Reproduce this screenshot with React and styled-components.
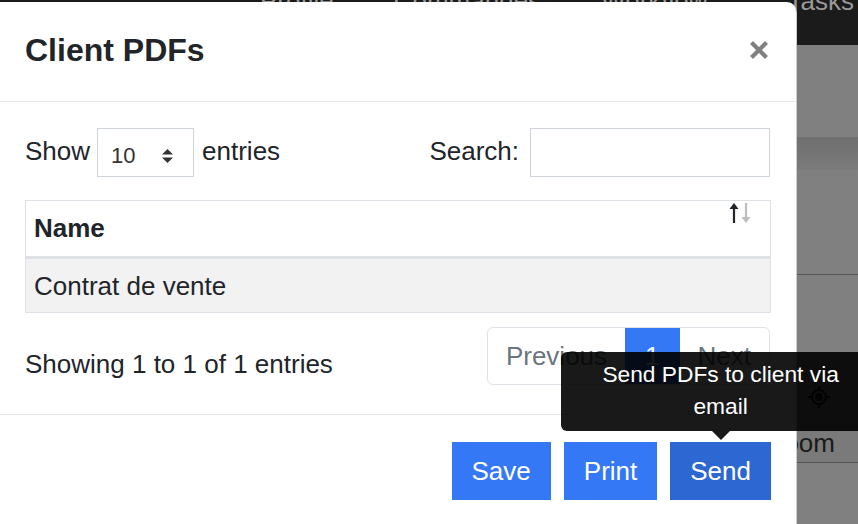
import React from "react";
import styled, { createGlobalStyle } from "styled-components";

const GlobalStyle = createGlobalStyle`
  html, body { margin: 0; padding: 0; }
  body {
    width: 858px;
    height: 524px;
    overflow: hidden;
    font-family: "Liberation Sans", Arial, Helvetica, sans-serif;
    color: #212529;
    background: #808080;
  }
  * { box-sizing: border-box; }
`;

/* ---------- dimmed page behind the modal ---------- */
const Backdrop = styled.div`
  position: fixed;
  inset: 0;
  display: flex;
  flex-direction: column;
  background: #808080;
  overflow: hidden;
`;

const TopBar = styled.div`
  height: 45px;
  flex: none;
  background: #1b1b1b;
  display: flex;
  align-items: flex-start;
  gap: 60px;
  padding: 0 4px 0 260px;
  overflow: hidden;
`;

const NavItem = styled.span`
  margin-top: -14px;
  font-size: 26px;
  color: #9a9a9a;
  white-space: nowrap;
  margin-left: ${(p) => (p.$last ? "auto" : "0")};
`;

const Spacer = styled.div`
  flex: none;
  height: ${(p) => p.$h}px;
`;

const ShadowBand = styled.div`
  flex: none;
  height: 33px;
  background: linear-gradient(#6f6f6f, #7b7b7b);
`;

const Rule = styled.div`
  flex: none;
  height: 1px;
  background: #555;
`;

const PageRow = styled.div`
  flex: none;
  height: ${(p) => p.$h}px;
  display: flex;
  align-items: center;
  justify-content: flex-end;
  gap: 10px;
  padding-right: ${(p) => p.$pr}px;
  background: ${(p) => p.$bg || "transparent"};
  font-size: 26px;
  color: #1a1a1a;
`;

/* ---------- modal ---------- */
const Modal = styled.div`
  position: fixed;
  left: 0;
  top: 2px;
  width: 797px;
  height: 560px;
  background: #fff;
  border-radius: 0 10px 0 0;
  border-right: 1px solid rgba(0, 0, 0, 0.2);
  display: flex;
  flex-direction: column;
`;

const Header = styled.div`
  height: 100px;
  flex: none;
  display: flex;
  align-items: center;
  justify-content: space-between;
  padding: 0 26px 2px 25px;
  border-bottom: 1px solid #e5e5e5;
`;

const Title = styled.h4`
  margin: 0;
  font-size: 32px;
  font-weight: 700;
  color: #212529;
  line-height: 1.2;
`;

const Close = styled.button`
  border: 0;
  background: none;
  padding: 0;
  width: 22px;
  height: 22px;
  display: flex;
  align-items: center;
  justify-content: center;
  cursor: pointer;
  margin-top: -2px;
`;

const Body = styled.div`
  flex: none;
  padding: 26px 26px 29px 25px;
  border-bottom: 1px solid #e5e5e5;
`;

const Controls = styled.div`
  display: flex;
  justify-content: space-between;
  align-items: center;
  height: 49px;
  margin-bottom: 23px;
`;

const Label = styled.label`
  display: flex;
  align-items: center;
  font-size: 26px;
  gap: ${(p) => p.$gap}px;
  padding-bottom: 3px;
`;

const SelectBox = styled.div`
  width: 97px;
  height: 49px;
  margin-top: 3px;
  border: 1px solid #ced4da;
  display: flex;
  align-items: center;
  justify-content: space-between;
  padding: 6px 19px 0 13px;
  font-size: 22px;
  color: #333;
`;

const SearchInput = styled.input`
  width: 240px;
  height: 49px;
  margin-top: 3px;
  border: 1px solid #ced4da;
  border-radius: 0;
  outline: none;
  font: inherit;
  font-size: 22px;
  padding: 0 10px;
`;

const Table = styled.table`
  width: 746px;
  border-collapse: collapse;
  border: 1px solid #dee2e6;
  font-size: 26px;
`;

const HeadCell = styled.th`
  position: relative;
  height: 57px;
  text-align: left;
  padding: 0 8px;
  font-weight: 700;
  border-top: 1px solid #dee2e6;
  border-bottom: 3px solid #dee2e6;
`;

const SortIcon = styled.svg`
  position: absolute;
  right: 16px;
  top: 1px;
`;

const Row = styled.tr`
  background: ${(p) => (p.$striped ? "#f2f2f2" : "#fff")};
`;

const Cell = styled.td`
  height: 55px;
  padding: 1px 8px 0;
  border-bottom: 1px solid #dee2e6;
`;

const Bottom = styled.div`
  display: flex;
  justify-content: space-between;
  align-items: flex-start;
  margin-top: 14px;
`;

const Info = styled.div`
  font-size: 26px;
  padding-top: 22px;
`;

const Pager = styled.ul`
  list-style: none;
  margin: 0;
  padding: 0;
  display: flex;
  height: 58px;
  border: 1px solid #dee2e6;
  border-radius: 6px;
  overflow: hidden;
`;

const PageItem = styled.li`
  display: flex;
  align-items: center;
  padding: 0 ${(p) => p.$px}px;
  font-size: 26px;
  color: ${(p) => (p.$active ? "#fff" : "#6c757d")};
  background: ${(p) => (p.$active ? "#3478f6" : "transparent")};
`;

const Footer = styled.div`
  display: flex;
  justify-content: flex-end;
  gap: 13px;
  padding: 27px 25px 0 0;
`;

const Button = styled.button`
  position: relative;
  height: 58px;
  padding: 0 20px;
  border: 0;
  border-radius: 0;
  font-family: inherit;
  font-size: 26px;
  color: #fff;
  background: ${(p) => (p.$hover ? "#2c67d2" : "#3478f6")};
  cursor: pointer;
`;

const Tooltip = styled.div`
  position: absolute;
  left: 50%;
  bottom: calc(100% + 11px);
  transform: translateX(-50%);
  width: 320px;
  padding: 6px 13px 9px;
  border-radius: 6px;
  background: rgba(0, 0, 0, 0.9);
  color: #fff;
  font-size: 22.75px;
  line-height: 32px;
  text-align: center;
  white-space: nowrap;
  pointer-events: none;

  &::after {
    content: "";
    position: absolute;
    left: 50%;
    top: 100%;
    margin-left: -9px;
    border: 9px solid transparent;
    border-top-color: rgba(0, 0, 0, 0.9);
    border-bottom: 0;
  }
`;

const CaretIcon = () => (
  <svg width="13" height="16" viewBox="0 0 13 16">
    <path d="M6.5 1 L12 6.5 H1 Z" fill="#333" />
    <path d="M6.5 15 L12 9.5 H1 Z" fill="#333" />
  </svg>
);

const TargetIcon = () => (
  <svg width="22" height="22" viewBox="0 0 22 22" fill="none" stroke="#1a1a1a" strokeWidth="2">
    <circle cx="11" cy="11" r="7" />
    <circle cx="11" cy="11" r="3" fill="#1a1a1a" />
    <path d="M11 0v4M11 18v4M0 11h4M18 11h4" />
  </svg>
);

export default function App() {
  return (
    <>
      <GlobalStyle />
      <Backdrop>
        <TopBar>
          <NavItem>Profile</NavItem>
          <NavItem>Commandes</NavItem>
          <NavItem>Workflow</NavItem>
          <NavItem $last>Tasks</NavItem>
        </TopBar>
        <Spacer $h={92} />
        <ShadowBand />
        <Spacer $h={104} />
        <Rule />
        <Spacer $h={94} />
        <PageRow $h={56} $pr={28}>
          <span>Localisation</span>
          <TargetIcon />
        </PageRow>
        <PageRow $h={37} $pr={23} $bg="#7a7a7a">
          <span>Zoom</span>
        </PageRow>
        <Rule />
      </Backdrop>

      <Modal>
        <Header>
          <Title>Client PDFs</Title>
          <Close aria-label="Close">
            <svg width="20" height="20" viewBox="0 0 20 20">
              <path d="M2.5 2.5 L17.5 17.5 M17.5 2.5 L2.5 17.5" stroke="#808080" strokeWidth="4.2" strokeLinecap="butt" />
            </svg>
          </Close>
        </Header>

        <Body>
          <Controls>
            <Label $gap={7}>
              Show
              <SelectBox>
                <span>10</span>
                <CaretIcon />
              </SelectBox>
              <span style={{ marginLeft: 1 }}>entries</span>
            </Label>
            <Label $gap={11}>
              Search:
              <SearchInput type="search" />
            </Label>
          </Controls>

          <Table>
            <thead>
              <tr>
                <HeadCell>
                  Name
                  <SortIcon width="26" height="22" viewBox="0 0 26 22">
                    <path d="M6 4 V21" stroke="#212529" strokeWidth="2.2" />
                    <path d="M6 1 L10.5 7 H1.5 Z" fill="#212529" />
                    <path d="M18 1 V18" stroke="#bdbdbd" strokeWidth="2.2" />
                    <path d="M18 21 L22.5 15 H13.5 Z" fill="#bdbdbd" />
                  </SortIcon>
                </HeadCell>
              </tr>
            </thead>
            <tbody>
              <Row $striped>
                <Cell>Contrat de vente</Cell>
              </Row>
            </tbody>
          </Table>

          <Bottom>
            <Info>Showing 1 to 1 of 1 entries</Info>
            <Pager>
              <PageItem $px={18}>Previous</PageItem>
              <PageItem $px={20} $active>1</PageItem>
              <PageItem $px={18}>Next</PageItem>
            </Pager>
          </Bottom>
        </Body>

        <Footer>
          <Button>Save</Button>
          <Button>Print</Button>
          <Button $hover>
            Send
            <Tooltip>
              Send PDFs to client via
              <br />
              email
            </Tooltip>
          </Button>
        </Footer>
      </Modal>
    </>
  );
}
